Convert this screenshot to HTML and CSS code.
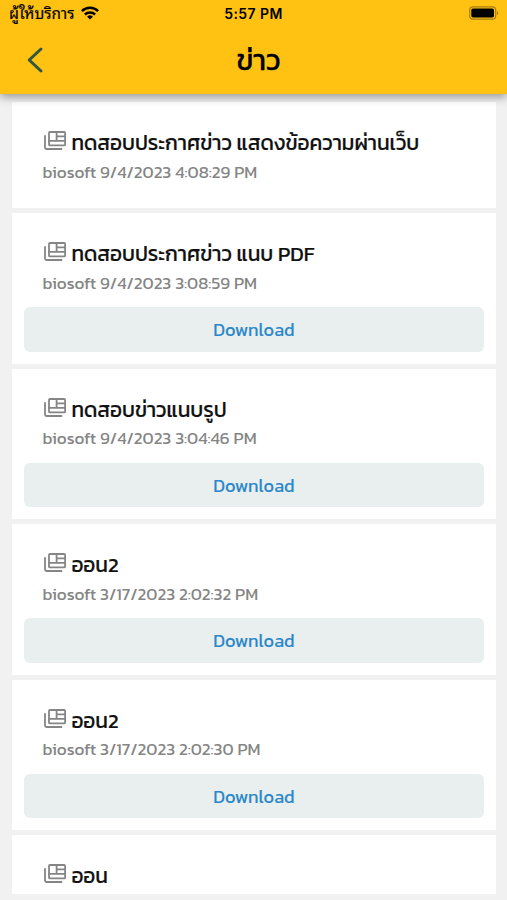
FILE: index.html
```html
<!DOCTYPE html>
<html lang="th">
<head>
<meta charset="utf-8">
<title>ข่าว</title>
<link rel="stylesheet" href="styles.css">
</head>
<body>
<svg class="defs" aria-hidden="true">
  <symbol id="news" viewBox="0 0 22 19">
    <g fill="none" stroke="#858585" stroke-width="1.8" stroke-linejoin="round" stroke-linecap="round">
      <rect x="5" y="1" width="16.1" height="13.4" rx="1"/>
      <path d="M5 9.9h16.1M12.6 1v8.9M12.6 5.4h8.5M1 4.8v11.7q0 1.5 1.5 1.5h15"/>
    </g>
  </symbol>
</svg>
<div class="screen">
  <header class="top">
    <div class="status">
      <div class="carrier"><span class="carrier-name">ผู้ให้บริการ</span>
        <svg class="wifi" width="18" height="14" viewBox="0 0 18 14"><g fill="none" stroke="#000" stroke-width="2.5"><path d="M.9 5.1a11.6 11.6 0 0 1 16.2 0"/><path d="M3.9 8.5a7.3 7.3 0 0 1 10.2 0"/></g><path d="M9 13.6 6.1 10.7a4.1 4.1 0 0 1 5.8 0z"/></svg>
      </div>
      <div class="clock">5:57 PM</div>
      <svg class="battery" width="31" height="14" viewBox="0 0 31 14"><rect x=".7" y=".8" width="26" height="12.4" rx="3.4" fill="none" stroke="#a67d10" stroke-width="1.2"/><rect x="2.3" y="2.5" width="22.7" height="9" rx="1.8"/><path d="M28 4.7q2.6 2.3 0 4.6z" fill="#a67d10"/></svg>
    </div>
    <div class="nav">
      <svg class="back" width="18" height="28" viewBox="0 0 18 28"><path d="M15 3 3.2 14 15 25" fill="none" stroke="#30563f" stroke-width="3" stroke-linecap="round" stroke-linejoin="round"/></svg>
      <h1>ข่าว</h1>
    </div>
  </header>
  <main class="list">
    <article class="card plain">
      <h2><svg class="icon"><use href="#news"/></svg><span>ทดสอบประกาศข่าว แสดงข้อความผ่านเว็บ</span></h2>
      <p>biosoft 9/4/2023 4:08:29 PM</p>
    </article>
    <article class="card">
      <h2><svg class="icon"><use href="#news"/></svg><span>ทดสอบประกาศข่าว แนบ PDF</span></h2>
      <p>biosoft 9/4/2023 3:08:59 PM</p>
      <button>Download</button>
    </article>
    <article class="card">
      <h2><svg class="icon"><use href="#news"/></svg><span>ทดสอบข่าวแนบรูป</span></h2>
      <p>biosoft 9/4/2023 3:04:46 PM</p>
      <button>Download</button>
    </article>
    <article class="card">
      <h2><svg class="icon"><use href="#news"/></svg><span>ออน2</span></h2>
      <p>biosoft 3/17/2023 2:02:32 PM</p>
      <button>Download</button>
    </article>
    <article class="card">
      <h2><svg class="icon"><use href="#news"/></svg><span>ออน2</span></h2>
      <p>biosoft 3/17/2023 2:02:30 PM</p>
      <button>Download</button>
    </article>
    <article class="card last">
      <h2><svg class="icon"><use href="#news"/></svg><span>ออน</span></h2>
    </article>
  </main>
</div>
</body>
</html>
```
FILE: styles.css
```css
* { box-sizing: border-box; }
body { margin: 0; font-family: Kanit, "Noto Sans", sans-serif; background: #f1f1f1; }
.defs { display: block; width: 0; height: 0; }
.screen { height: 900px; overflow: hidden; display: flex; flex-direction: column; }
.top { height: 94px; flex: none; background: #ffc213; box-shadow: 0 3px 9px rgba(0,0,0,.38); z-index: 1; }
.status { height: 28px; display: grid; grid-template-columns: 1fr auto 1fr; align-items: center; padding: 0 7px 0 9px; }
.carrier { display: flex; align-items: center; gap: 6px; font-family: "Noto Sans Thai Looped", Loma, "Noto Sans Thai", "Noto Sans", sans-serif; font-size: 15.3px; line-height: 20px; white-space: nowrap; -webkit-text-stroke: .2px #000; }
.carrier-name { width: 66px; margin-top: -4px; }
.wifi { margin-top: -2px; }
.clock { font: 600 14px/20px Inter, sans-serif; letter-spacing: .4px; margin-right: 2px; }
.battery { justify-self: end; margin-top: -2px; }
.nav { height: 66px; display: grid; grid-template-columns: 60px 1fr 60px; align-items: center; }
.back { margin: -2px 0 0 26px; }
h1 { margin: -2px 0 0; text-align: center; font-size: 29px; font-weight: 400; line-height: 40px; padding-left: 10px; -webkit-text-stroke: .3px #000; }
.list { padding: 8px 11px 6px 12px; display: flex; flex-direction: column; gap: 5px; }
.card { flex: none; height: 150.6px; background: #fff; padding: 28px 12px 0; }
.plain { height: 106px; }
.last { height: 58.4px; overflow: hidden; }
h2 { margin: 0 0 0 20px; height: 26px; display: flex; align-items: center; gap: 5.4px; font-size: 20.8px; line-height: 26px; font-weight: 400; color: #111; white-space: nowrap; -webkit-text-stroke: .2px #111; }
.icon { width: 22px; height: 19px; margin-top: -5px; }
p { margin: 3.6px 0 0 18.4px; font-size: 17.1px; line-height: 24px; color: #858585; white-space: nowrap; }
button { display: block; width: 100%; height: 44.6px; margin: 12.5px 0 0; border: 0; border-radius: 6px; background: #e9eeef; color: #2b88c8; font: 400 18.2px/45px Kanit, "Noto Sans", sans-serif; padding: 0; }
```
